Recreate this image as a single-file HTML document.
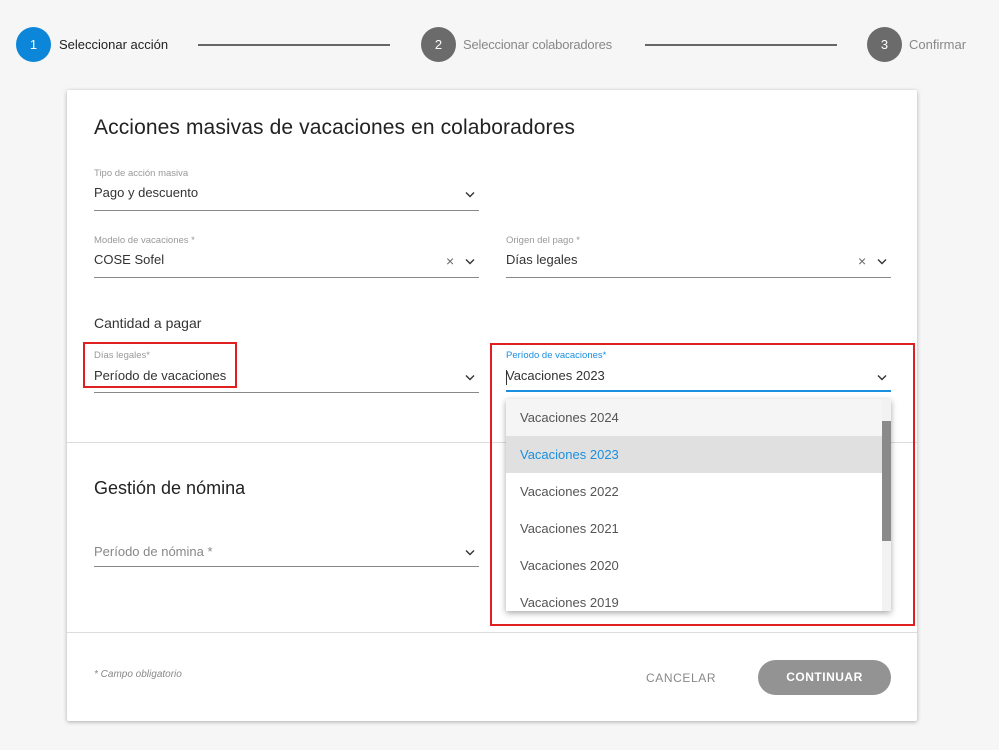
<!DOCTYPE html>
<html><head><meta charset="utf-8"><style>
*{margin:0;padding:0;box-sizing:border-box}
body{width:999px;height:750px;background:#f6f6f6;font-family:"Liberation Sans",sans-serif;position:relative;overflow:hidden;color:#333}
.a{position:absolute}
.circ{width:35px;height:35px;border-radius:50%;color:#fff;font-size:13px;text-align:center;line-height:35px}
.step{font-size:13px;top:37px}
.ln{height:2px;background:#666;top:44px}
.card{left:67px;top:90px;width:850px;height:631px;background:#fff;box-shadow:0 1px 4px rgba(0,0,0,.3);border-radius:2px}
.lbl{font-size:9.5px;color:#999}
.val{font-size:13px;color:#333}
.ul{height:1px;background:#888}
.chev{width:10px;height:7px}
.h{font-size:14px}
.item{left:506px;width:376px;height:37px;font-size:13px;color:#555;padding-left:14px;line-height:37px}
</style></head><body>
<div class="a circ" style="left:16px;top:27px;background:#0b86d9">1</div>
<div class="a step" style="left:59px;color:#222">Seleccionar acción</div>
<div class="a ln" style="left:198px;width:192px"></div>
<div class="a circ" style="left:421px;top:27px;background:#6b6b6b">2</div>
<div class="a step" style="left:463px;color:#888;letter-spacing:-.2px">Seleccionar colaboradores</div>
<div class="a ln" style="left:645px;width:192px"></div>
<div class="a circ" style="left:867px;top:27px;background:#6b6b6b">3</div>
<div class="a step" style="left:909px;color:#888">Confirmar</div>

<div class="a card"></div>
<div class="a" style="left:94px;top:116px;font-size:21px;color:#222;letter-spacing:.1px">Acciones masivas de vacaciones en colaboradores</div>

<div class="a lbl" style="left:94px;top:168px">Tipo de acción masiva</div>
<div class="a val" style="left:94px;top:185px">Pago y descuento</div>
<svg class="a chev" style="left:465px;top:191px" viewBox="0 0 10 7"><path d="M1 1.5L5 5.5L9 1.5" fill="none" stroke="#333" stroke-width="1.4"/></svg>
<div class="a ul" style="left:94px;top:210px;width:385px"></div>

<div class="a lbl" style="left:94px;top:235px">Modelo de vacaciones *</div>
<div class="a val" style="left:94px;top:252px">COSE Sofel</div>
<div class="a" style="left:446px;top:253px;font-size:14px;color:#666">×</div>
<svg class="a chev" style="left:465px;top:258px" viewBox="0 0 10 7"><path d="M1 1.5L5 5.5L9 1.5" fill="none" stroke="#333" stroke-width="1.4"/></svg>
<div class="a ul" style="left:94px;top:277px;width:385px"></div>

<div class="a lbl" style="left:506px;top:235px">Origen del pago *</div>
<div class="a val" style="left:506px;top:252px">Días legales</div>
<div class="a" style="left:858px;top:253px;font-size:14px;color:#666">×</div>
<svg class="a chev" style="left:877px;top:258px" viewBox="0 0 10 7"><path d="M1 1.5L5 5.5L9 1.5" fill="none" stroke="#333" stroke-width="1.4"/></svg>
<div class="a ul" style="left:506px;top:277px;width:385px"></div>

<div class="a h" style="left:94px;top:315px;color:#333">Cantidad a pagar</div>
<div class="a lbl" style="left:94px;top:350px">Días legales*</div>
<div class="a val" style="left:94px;top:368px">Período de vacaciones</div>
<div class="a" style="left:83px;top:342px;width:154px;height:46px;border:2px solid #e02020"></div>
<svg class="a chev" style="left:465px;top:374px" viewBox="0 0 10 7"><path d="M1 1.5L5 5.5L9 1.5" fill="none" stroke="#333" stroke-width="1.4"/></svg>
<div class="a ul" style="left:94px;top:392px;width:385px"></div>

<div class="a" style="left:67px;top:442px;width:850px;height:1px;background:#ddd"></div>
<div class="a" style="left:94px;top:478px;font-size:18px;color:#222">Gestión de nómina</div>
<div class="a val" style="left:94px;top:544px;color:#888">Período de nómina *</div>
<svg class="a chev" style="left:465px;top:549px" viewBox="0 0 10 7"><path d="M1 1.5L5 5.5L9 1.5" fill="none" stroke="#333" stroke-width="1.4"/></svg>
<div class="a ul" style="left:94px;top:566px;width:385px"></div>

<div class="a" style="left:67px;top:632px;width:850px;height:1px;background:#ddd"></div>
<div class="a" style="left:94px;top:669px;font-size:10px;font-style:italic;color:#888">* Campo obligatorio</div>
<div class="a" style="left:646px;top:671px;font-size:12px;letter-spacing:.6px;color:#888">CANCELAR</div>
<div class="a" style="left:758px;top:660px;width:133px;height:35px;border-radius:18px;background:#939393;color:#fff;font-size:12px;letter-spacing:.5px;text-align:center;line-height:35px;font-weight:bold">CONTINUAR</div>

<div class="a lbl" style="left:506px;top:350px;color:#1a8fe0">Período de vacaciones*</div>
<div class="a val" style="left:506px;top:368px">Vacaciones 2023</div>
<div class="a" style="left:506px;top:370px;width:1px;height:15px;background:#333"></div>
<svg class="a chev" style="left:877px;top:374px" viewBox="0 0 10 7"><path d="M1 1.5L5 5.5L9 1.5" fill="none" stroke="#333" stroke-width="1.4"/></svg>
<div class="a" style="left:506px;top:390px;width:385px;height:2px;background:#1a8fe0"></div>

<div class="a" style="left:506px;top:399px;width:385px;height:212px;background:#fff;box-shadow:0 2px 6px rgba(0,0,0,.35);overflow:hidden"></div>
<div class="a item" style="top:399px;background:#f5f5f5">Vacaciones 2024</div>
<div class="a item" style="top:436px;background:#e0e0e0;color:#1a8fe0">Vacaciones 2023</div>
<div class="a item" style="top:473px">Vacaciones 2022</div>
<div class="a item" style="top:510px">Vacaciones 2021</div>
<div class="a item" style="top:547px">Vacaciones 2020</div>
<div class="a item" style="top:584px;height:27px;overflow:hidden">Vacaciones 2019</div>
<div class="a" style="left:882px;top:399px;width:9px;height:212px;background:#f2f2f2"></div>
<div class="a" style="left:882px;top:421px;width:9px;height:120px;background:#8a8a8a"></div>

<div class="a" style="left:490px;top:343px;width:425px;height:283px;border:2px solid #e02020"></div>
</body></html>
